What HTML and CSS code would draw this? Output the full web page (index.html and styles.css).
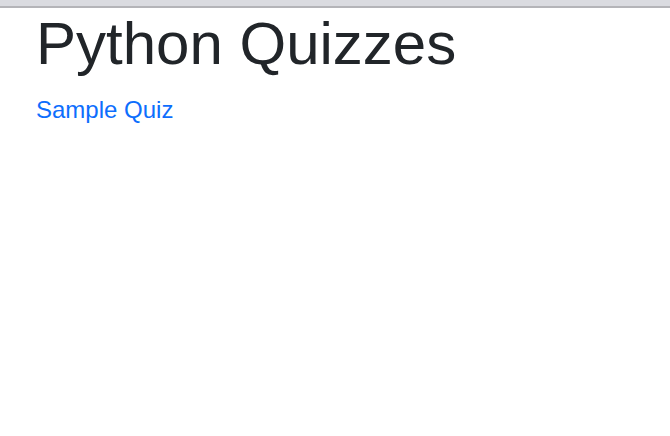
FILE: index.html
```html
<!DOCTYPE html>
<html>
<head>
<meta charset="utf-8">
<title>Python Quizzes</title>
<link rel="stylesheet" href="styles.css">
</head>
<body>
<div class="topbar"></div>
<main class="container">
  <h1 class="title">Python Quizzes</h1>
  <a class="quiz-link" href="#">Sample Quiz</a>
</main>
</body>
</html>
```
FILE: styles.css
```css
html, body {
  margin: 0;
  padding: 0;
  background: #fff;
}
body {
  font-family: "Liberation Sans", Arial, sans-serif;
  color: #212529;
}
.topbar {
  height: 6px;
  background: #dadbe0;
  border-bottom: 2px solid #b4b4b8;
}
.container {
  padding: 0 36px;
}
.title {
  font-size: 60px;
  font-weight: 400;
  line-height: 1.2;
  margin: 0 0 12px;
  color: #212529;
}
.quiz-link {
  display: block;
  font-size: 24px;
  line-height: 1.5;
  color: #0d6efd;
  text-decoration: none;
}
```
